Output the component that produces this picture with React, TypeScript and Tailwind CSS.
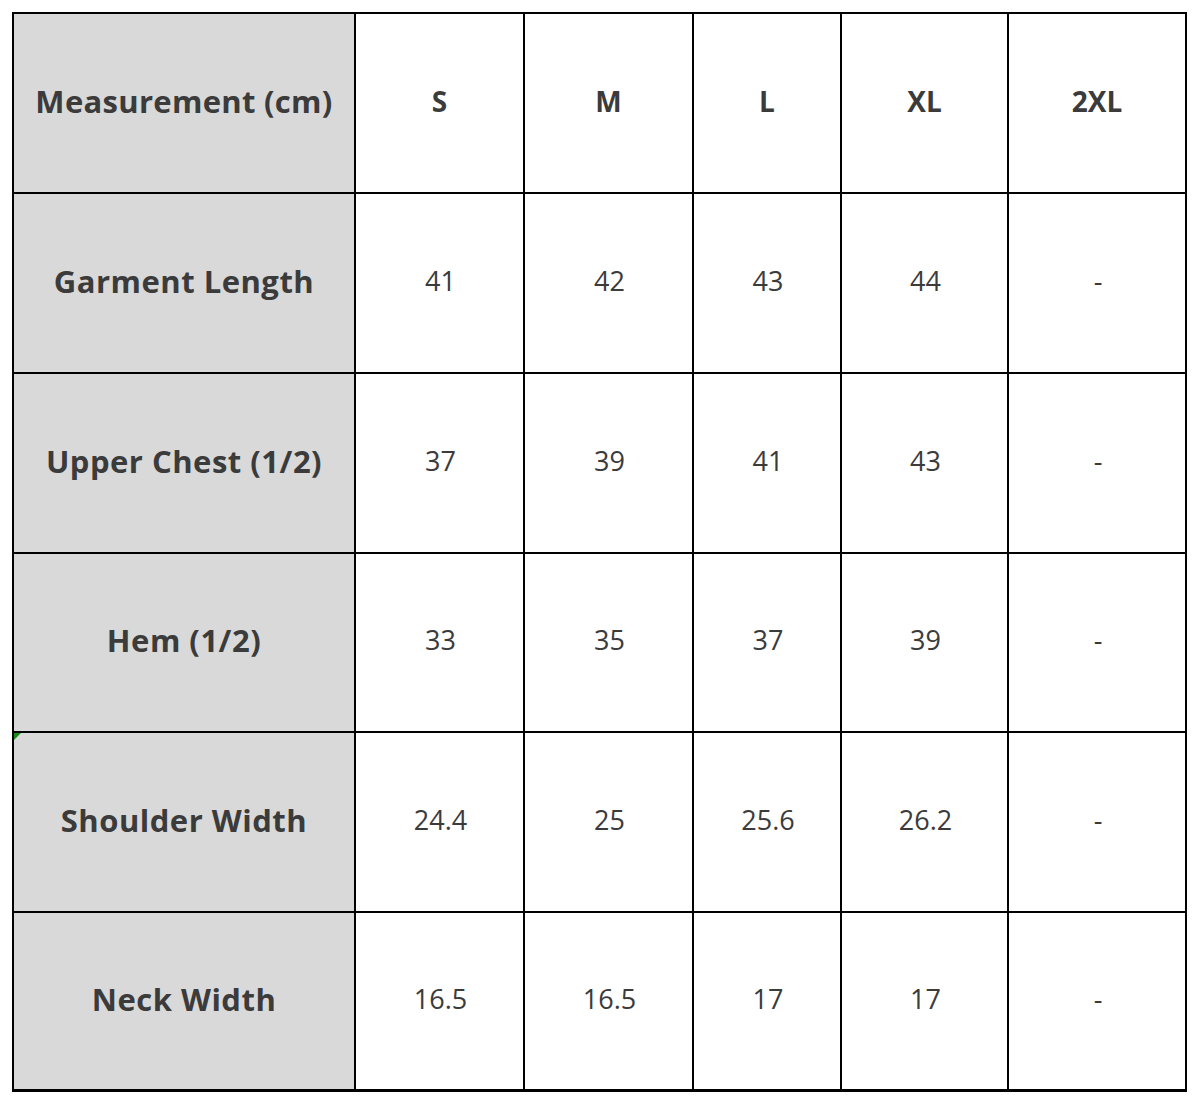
import React from "react";

const headers = ["S", "M", "L", "XL", "2XL"];
const rows: [string, string[]][] = [
  ["Garment Length", ["41", "42", "43", "44", "-"]],
  ["Upper Chest (1/2)", ["37", "39", "41", "43", "-"]],
  ["Hem (1/2)", ["33", "35", "37", "39", "-"]],
  ["Shoulder Width", ["24.4", "25", "25.6", "26.2", "-"]],
  ["Neck Width", ["16.5", "16.5", "17", "17", "-"]],
];

export default function App() {
  return (
    <div className="w-[1200px] h-[1104px] bg-white pt-[12px] pl-[12px]" style={{ fontFamily: '"Open Sans", "Noto Sans", sans-serif' }}>
      <div className="grid w-[1175px] bg-black gap-[2px] pt-[2px] pl-[2px] pr-[2px] pb-[3px] grid-cols-[340px_167px_167px_146px_165px_176px] grid-rows-[178px_178px_178px_177px_178px_176px] text-[#3b3b3b]">
        <div className="bg-[#d9d9d9] flex items-center justify-center pb-[4px] text-[31px] font-bold tracking-[0.3px]">Measurement (cm)</div>
        {headers.map((h) => (
          <div key={h} className="bg-white flex items-center justify-center pb-[4px] text-[28px] font-bold">{h}</div>
        ))}
        {rows.map(([label, vals], ri) => (
          <React.Fragment key={label}>
            <div className="relative bg-[#d9d9d9] flex items-center justify-center pb-[4px] text-[31px] font-bold tracking-[0.5px]">
              {ri === 3 && (
                <div className="absolute left-0 top-0 w-0 h-0 border-t-[7px] border-t-[#1a8a1a] border-r-[7px] border-r-transparent" />
              )}
              {label}
            </div>
            {vals.map((v, i) => (
              <div key={i} className="bg-white flex items-center justify-center pb-[4px] pl-[2px] text-[27px]">{v}</div>
            ))}
          </React.Fragment>
        ))}
      </div>
    </div>
  );
}
